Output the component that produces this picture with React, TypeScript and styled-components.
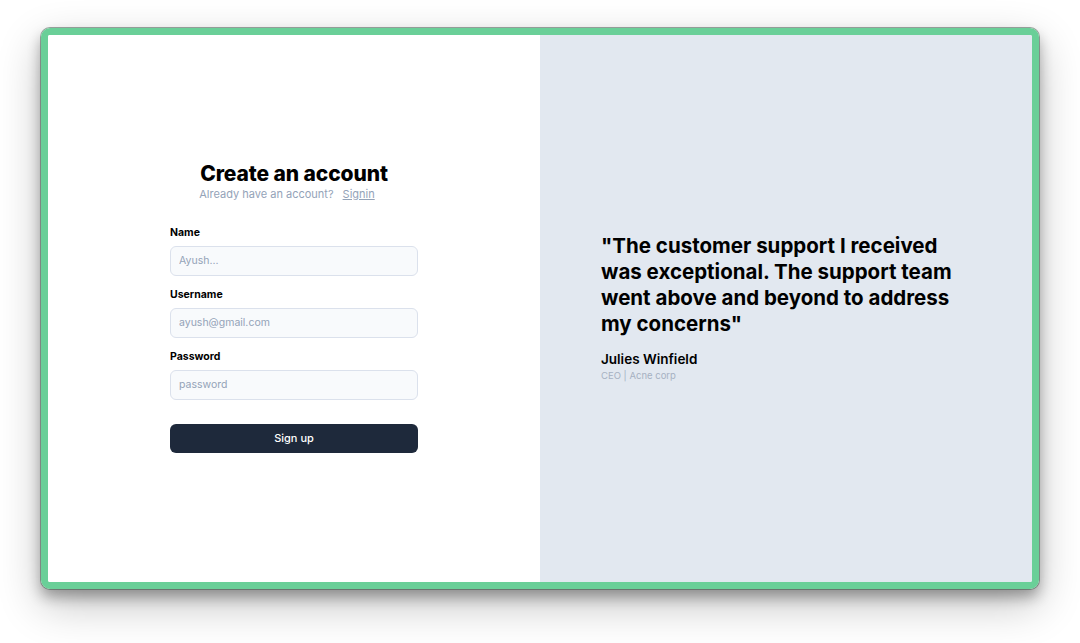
import styled, { createGlobalStyle } from 'styled-components';

const GlobalStyle = createGlobalStyle`
  html, body {
    margin: 0;
    padding: 0;
    background: #ffffff;
    font-family: Inter, "Noto Sans", "Liberation Sans", sans-serif;
  }
  * { box-sizing: border-box; }
`;

const Stage = styled.div`
  width: 1080px;
  height: 643px;
  padding: 28px 41px 54px 41px;
  background: #ffffff;
`;

const Frame = styled.div`
  height: 100%;
  border: 7px solid #6acf98;
  border-radius: 9px;
  box-shadow:
    0 0 0 1px rgba(60, 80, 70, 0.5),
    0 8px 14px rgba(0, 0, 0, 0.32),
    0 16px 44px rgba(0, 0, 0, 0.24);
  overflow: hidden;
  display: grid;
  grid-template-columns: 1fr 1fr;
`;

const Panel = styled.section<{ $tone: 'light' | 'muted' }>`
  background: ${p => (p.$tone === 'light' ? '#ffffff' : '#e2e8f0')};
  display: flex;
  align-items: center;
  justify-content: center;
`;

const FormBox = styled.div`
  width: 248px;
  display: flex;
  flex-direction: column;
  margin-top: -4px;
`;

const Heading = styled.div`
  text-align: center;
  margin-bottom: 23px;
`;

const Title = styled.h1`
  margin: 0;
  font-size: 21px;
  line-height: 25px;
  font-weight: 800;
  color: #000000;
  letter-spacing: -0.1px;
`;

const Subtitle = styled.p`
  margin: 0;
  padding-right: 14px;
  font-size: 11px;
  line-height: 17px;
  color: #94a3b8;
  a {
    color: #94a3b8;
    text-decoration: underline;
    margin-left: 9px;
  }
`;

const Field = styled.div`
  display: flex;
  flex-direction: column;
  gap: 6px;
  margin-bottom: 12px;
`;

const Label = styled.label`
  font-size: 10.5px;
  line-height: 14px;
  font-weight: 700;
  color: #000000;
`;

const Input = styled.input`
  height: 30px;
  width: 100%;
  border: 1px solid #dbe1ec;
  border-radius: 6px;
  background: #f8fafc;
  padding: 0 8px;
  font-family: inherit;
  font-size: 10.5px;
  color: #1e293b;
  outline: none;
  &::placeholder {
    color: #94a3b8;
  }
`;

const Button = styled.button`
  margin-top: 12px;
  height: 29px;
  border: none;
  border-radius: 6px;
  background: #1e293b;
  color: #ffffff;
  font-family: inherit;
  font-size: 11px;
  font-weight: 500;
  cursor: pointer;
`;

const QuoteBox = styled.div`
  width: 370px;
  margin-top: 0;
`;

const Quote = styled.blockquote`
  margin: 0 0 13px 0;
  max-width: 362px;
  font-size: 20.5px;
  line-height: 26px;
  font-weight: 700;
  color: #000000;
`;

const Author = styled.div`
  font-size: 13.5px;
  line-height: 18px;
  font-weight: 600;
  color: #000000;
`;

const Role = styled.div`
  font-size: 9.5px;
  line-height: 16px;
  color: #a6b1c2;
`;

const fields = [
  { label: 'Name', placeholder: 'Ayush...', type: 'text' },
  { label: 'Username', placeholder: 'ayush@gmail.com', type: 'email' },
  { label: 'Password', placeholder: 'password', type: 'password' },
];

export default function App() {
  return (
    <>
      <GlobalStyle />
      <Stage>
        <Frame>
          <Panel $tone="light">
            <FormBox>
              <Heading>
                <Title>Create an account</Title>
                <Subtitle>
                  Already have an account?<a href="#">Signin</a>
                </Subtitle>
              </Heading>
              {fields.map(f => (
                <Field key={f.label}>
                  <Label>{f.label}</Label>
                  <Input type={f.type} placeholder={f.placeholder} />
                </Field>
              ))}
              <Button>Sign up</Button>
            </FormBox>
          </Panel>
          <Panel $tone="muted">
            <QuoteBox>
              <Quote>
                "The customer support I received was exceptional. The support team went above and beyond to address my concerns"
              </Quote>
              <Author>Julies Winfield</Author>
              <Role>CEO | Acne corp</Role>
            </QuoteBox>
          </Panel>
        </Frame>
      </Stage>
    </>
  );
}
